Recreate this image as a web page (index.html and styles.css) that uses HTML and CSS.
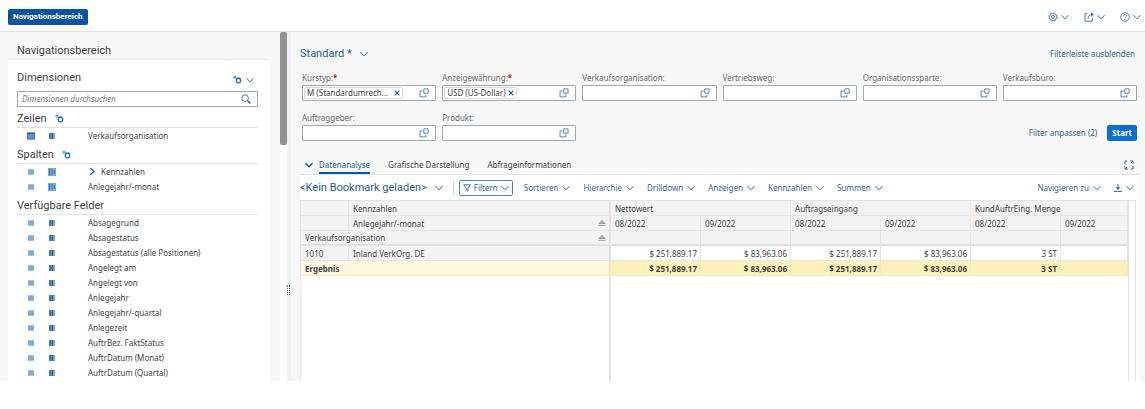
FILE: index.html
```html
<!DOCTYPE html>
<html lang="de">
<head>
    <meta charset="UTF-8">
    <meta name="viewport" content="width=device-width, initial-scale=1.0">
    <title>Navigationsbereich</title>
    <link rel="stylesheet" href="styles.css">
</head>
<body>
    <!-- Icon set -->
    <svg class="sprite" aria-hidden="true">
        <symbol id="i-down" viewBox="0 0 8 8"><path d="M.5 2.2 4 5.8l3.5-3.6" fill="none" stroke="currentColor"/></symbol>
        <symbol id="i-down-bold" viewBox="0 0 8 8"><path d="M.5 2.2 4 5.8l3.5-3.6" fill="none" stroke="currentColor" stroke-width="1.4"/></symbol>
        <symbol id="i-right" viewBox="0 0 8 8"><path d="M2 1l3.5 3L2 7" fill="none" stroke="currentColor" stroke-width="1.1"/></symbol>
        <symbol id="i-gear" viewBox="0 0 10 10"><g fill="none" stroke="currentColor"><circle cx="5" cy="5" r="3.5" stroke-width=".7"/><circle cx="5" cy="5" r="4.2" stroke-width=".8" stroke-dasharray="1.65 1.65"/><circle cx="5" cy="5" r="1.5" stroke-width=".9"/></g></symbol>
        <symbol id="i-share" viewBox="0 0 10 10"><path d="M3.4 1.4H1v7.8h7.4V6.2M4 6.6c0-2.6 1.4-4 4-4" fill="none" stroke="currentColor" stroke-width=".9"/><path d="M7.2.4 9.8 2.6 7.2 4.8z" fill="currentColor"/></symbol>
        <symbol id="i-help" viewBox="0 0 10 10"><g fill="none" stroke="currentColor" stroke-width=".8"><circle cx="5" cy="5" r="4.3"/><path d="M3.6 3.9c0-2 2.9-1.9 2.9-.2 0 1.1-1.5 1.1-1.5 2.3"/></g><circle cx="5" cy="7.3" r=".6" fill="currentColor"/></symbol>
        <symbol id="i-search" viewBox="0 0 10 10"><circle cx="4.1" cy="4.1" r="3.3" fill="none" stroke="currentColor" stroke-width=".9"/><path d="M6.5 6.5 9.4 9.4" stroke="currentColor" stroke-width="1.5"/></symbol>
        <symbol id="i-cogs" viewBox="0 0 9 9"><g fill="none" stroke="currentColor"><circle cx="5.5" cy="5.6" r="2.2" stroke-width="1.3"/><circle cx="1.9" cy="2.2" r="1.1" stroke-width=".9"/><path d="M2.6 2.9 4 4.2M3.8 2.9h3.8" stroke-width=".9"/></g></symbol>
        <symbol id="i-rows" viewBox="0 0 8 8"><path d="M1 1.6h6v4.9H1z" fill="#a3c3e2"/><path d="M1 2h6M1 4h6M1 6h6" stroke="#5b91c5" stroke-width=".9"/></symbol>
        <symbol id="i-rows-on" viewBox="0 0 8 8"><path d="M.5 1h7v6.2h-7z" fill="#72a3d2" stroke="#2664a5" stroke-width=".8"/><path d="M.2 1.4h7.6" stroke="#1d5b9e" stroke-width="1.6"/><path d="M1 4h6M1 5.7h6" stroke="#397bb9" stroke-width=".6"/></symbol>
        <symbol id="i-cols" viewBox="0 0 8 8"><path d="M1.2 1h5.4v6H1.2z" fill="#8eb4da"/><path d="M2 1v6M4.3 1v6" stroke="#1c5b9f" stroke-width="1.4"/><path d="M6.2 1v6" stroke="#4d86bf" stroke-width=".8"/></symbol>
        <symbol id="i-cols-on" viewBox="0 0 8 8"><path d="M0 0h8v8H0z" fill="#8db5dc"/><path d="M1.7 1v6M4 1v6M6.2 2v4" stroke="#2f6daf" stroke-width="1.1"/><path d="M.3.3h7.4v7.4H.3z" fill="none" stroke="#6495c6" stroke-width=".5"/></symbol>
        <symbol id="i-copy" viewBox="0 0 10 10"><path d="M4.8.9h4.3v4.3H4.8zM3.7 3H1v5.9h5.9V6.6" fill="none" stroke="currentColor" stroke-width=".9"/></symbol>
        <symbol id="i-close" viewBox="0 0 6 6"><path d="M.7.7 5.3 5.3M5.3.7.7 5.3" stroke="currentColor" stroke-width="1.1"/></symbol>
        <symbol id="i-full" viewBox="0 0 10 10"><path d="M1 4V1h2.2M6.2 1H9v2.8M9 6.2V9H6.6M3.8 9H1V6.2M1.2 8.8l1.9-1.9M8.8 1.2 6.9 3.1" fill="none" stroke="currentColor"/></symbol>
        <symbol id="i-filter" viewBox="0 0 8 8"><path d="M.7.8h6.6L5 4v3.2L3.2 6V4z" fill="none" stroke="currentColor" stroke-width=".9"/></symbol>
        <symbol id="i-load" viewBox="0 0 8 8"><path d="M4 0v5M0 7.4h8" stroke="currentColor"/><path d="M1.6 3.2h4.8L4 6z" fill="currentColor"/></symbol>
        <symbol id="i-sort" viewBox="0 0 8 8"><path d="M4 .8 7.2 4H.8z" fill="#aaa"/><path d="M.5 4.5h7M.5 6.3h7" stroke="#949494" stroke-width=".9"/></symbol>
    </svg>

    <header class="shell">
        <button class="btn-nav">Navigationsbereich</button>
        <div class="shell-tools">
            <button class="tool" aria-label="Einstellungen"><svg class="icon"><use href="#i-gear"/></svg><svg class="chev"><use href="#i-down"/></svg></button>
            <button class="tool" aria-label="Teilen"><svg class="icon"><use href="#i-share"/></svg><svg class="chev"><use href="#i-down"/></svg></button>
            <button class="tool" aria-label="Hilfe"><svg class="icon"><use href="#i-help"/></svg><svg class="chev"><use href="#i-down"/></svg></button>
        </div>
    </header>

    <div class="app">
        <aside class="sidebar">
            <h1 class="side-title">Navigationsbereich</h1>
            <div class="side-panel">
                <div class="dim-head">
                    <h2>Dimensionen</h2>
                    <button class="tool" aria-label="Anzeigeoptionen"><svg class="cogs"><use href="#i-cogs"/></svg><svg class="chev"><use href="#i-down"/></svg></button>
                </div>
                <div class="search">
                    <input type="text" aria-label="Dimensionen durchsuchen" placeholder="Dimensionen durchsuchen">
                    <button aria-label="Suchen"><svg class="icon"><use href="#i-search"/></svg></button>
                </div>

                <h2 class="group">Zeilen <svg class="cogs"><use href="#i-cogs"/></svg></h2>
                <ul class="fields">
                    <li><svg><use href="#i-rows-on"/></svg><svg><use href="#i-cols"/></svg><span>Verkaufsorganisation</span></li>
                </ul>

                <h2 class="group">Spalten <svg class="cogs"><use href="#i-cogs"/></svg></h2>
                <ul class="fields">
                    <li><svg><use href="#i-rows"/></svg><svg><use href="#i-cols-on"/></svg><span class="parent"><svg><use href="#i-right"/></svg>Kennzahlen</span></li>
                    <li><svg><use href="#i-rows"/></svg><svg><use href="#i-cols-on"/></svg><span>Anlegejahr/-monat</span></li>
                </ul>

                <h2 class="group">Verfügbare Felder</h2>
                <ul class="fields">
                    <li><svg><use href="#i-rows"/></svg><svg><use href="#i-cols"/></svg><span>Absagegrund</span></li>
                    <li><svg><use href="#i-rows"/></svg><svg><use href="#i-cols"/></svg><span>Absagestatus</span></li>
                    <li><svg><use href="#i-rows"/></svg><svg><use href="#i-cols"/></svg><span>Absagestatus (alle Positionen)</span></li>
                    <li><svg><use href="#i-rows"/></svg><svg><use href="#i-cols"/></svg><span>Angelegt am</span></li>
                    <li><svg><use href="#i-rows"/></svg><svg><use href="#i-cols"/></svg><span>Angelegt von</span></li>
                    <li><svg><use href="#i-rows"/></svg><svg><use href="#i-cols"/></svg><span>Anlegejahr</span></li>
                    <li><svg><use href="#i-rows"/></svg><svg><use href="#i-cols"/></svg><span>Anlegejahr/-quartal</span></li>
                    <li><svg><use href="#i-rows"/></svg><svg><use href="#i-cols"/></svg><span>Anlegezeit</span></li>
                    <li><svg><use href="#i-rows"/></svg><svg><use href="#i-cols"/></svg><span>AuftrBez. FaktStatus</span></li>
                    <li><svg><use href="#i-rows"/></svg><svg><use href="#i-cols"/></svg><span>AuftrDatum (Monat)</span></li>
                    <li><svg><use href="#i-rows"/></svg><svg><use href="#i-cols"/></svg><span>AuftrDatum (Quartal)</span></li>
                </ul>
            </div>
        </aside>
        <div class="scroll"><div class="scroll-thumb"></div></div>
        <div class="splitter"><div class="grip"></div></div>

        <main class="content">
            <div class="variant">
                <button class="variant-name">Standard *<svg class="chev"><use href="#i-down"/></svg></button>
                <a href="#">Filterleiste ausblenden</a>
            </div>

            <form class="filters">
                <div class="filter">
                    <label for="kurstyp">Kurstyp:<b>*</b></label>
                    <div class="field">
                        <span class="token wide"><span>M (Standardumrech...</span><button type="button" aria-label="Entfernen"><svg><use href="#i-close"/></svg></button></span>
                        <input type="text" id="kurstyp">
                        <button type="button" aria-label="Wertehilfe"><svg class="icon"><use href="#i-copy"/></svg></button>
                    </div>
                </div>
                <div class="filter">
                    <label for="waehrung">Anzeigewährung:<b>*</b></label>
                    <div class="field">
                        <span class="token"><span>USD (US-Dollar)</span><button type="button" aria-label="Entfernen"><svg><use href="#i-close"/></svg></button></span>
                        <input type="text" id="waehrung">
                        <button type="button" aria-label="Wertehilfe"><svg class="icon"><use href="#i-copy"/></svg></button>
                    </div>
                </div>
                <div class="filter">
                    <label for="vkorg">Verkaufsorganisation:</label>
                    <div class="field"><input type="text" id="vkorg"><button type="button" aria-label="Wertehilfe"><svg class="icon"><use href="#i-copy"/></svg></button></div>
                </div>
                <div class="filter">
                    <label for="vtweg">Vertriebsweg:</label>
                    <div class="field"><input type="text" id="vtweg"><button type="button" aria-label="Wertehilfe"><svg class="icon"><use href="#i-copy"/></svg></button></div>
                </div>
                <div class="filter">
                    <label for="sparte">Organisationssparte:</label>
                    <div class="field"><input type="text" id="sparte"><button type="button" aria-label="Wertehilfe"><svg class="icon"><use href="#i-copy"/></svg></button></div>
                </div>
                <div class="filter">
                    <label for="buero">Verkaufsbüro:</label>
                    <div class="field"><input type="text" id="buero"><button type="button" aria-label="Wertehilfe"><svg class="icon"><use href="#i-copy"/></svg></button></div>
                </div>
                <div class="filter">
                    <label for="auftraggeber">Auftraggeber:</label>
                    <div class="field"><input type="text" id="auftraggeber"><button type="button" aria-label="Wertehilfe"><svg class="icon"><use href="#i-copy"/></svg></button></div>
                </div>
                <div class="filter">
                    <label for="produkt">Produkt:</label>
                    <div class="field"><input type="text" id="produkt"><button type="button" aria-label="Wertehilfe"><svg class="icon"><use href="#i-copy"/></svg></button></div>
                </div>
                <div class="filter-actions">
                    <a href="#">Filter anpassen (2)</a>
                    <button type="button" class="btn-start">Start</button>
                </div>
            </form>

            <nav class="tabs">
                <button class="tab-toggle" aria-label="Tabs einklappen"><svg class="chev"><use href="#i-down-bold"/></svg></button>
                <a href="#" class="tab active">Datenanalyse</a>
                <a href="#" class="tab">Grafische Darstellung</a>
                <a href="#" class="tab">Abfrageinformationen</a>
                <button class="full" aria-label="Vollbild"><svg class="icon"><use href="#i-full"/></svg></button>
            </nav>

            <section class="card">
                <div class="toolbar">
                    <button class="bookmark">&lt;Kein Bookmark geladen&gt;<svg class="chev"><use href="#i-down"/></svg></button>
                    <span class="divider"></span>
                    <button class="tool boxed"><svg class="chev"><use href="#i-filter"/></svg>Filtern<svg class="chev"><use href="#i-down"/></svg></button>
                    <button class="tool">Sortieren<svg class="chev"><use href="#i-down"/></svg></button>
                    <button class="tool">Hierarchie<svg class="chev"><use href="#i-down"/></svg></button>
                    <button class="tool">Drilldown<svg class="chev"><use href="#i-down"/></svg></button>
                    <button class="tool">Anzeigen<svg class="chev"><use href="#i-down"/></svg></button>
                    <button class="tool">Kennzahlen<svg class="chev"><use href="#i-down"/></svg></button>
                    <button class="tool">Summen<svg class="chev"><use href="#i-down"/></svg></button>
                    <button class="tool push">Navigieren zu<svg class="chev"><use href="#i-down"/></svg></button>
                    <button class="tool" aria-label="Herunterladen"><svg class="chev"><use href="#i-load"/></svg><svg class="chev"><use href="#i-down"/></svg></button>
                </div>

                <div class="grid-wrap">
                    <table class="grid">
                        <colgroup>
                            <col class="c-key"><col class="c-text"><col class="c-val"><col class="c-val"><col class="c-val"><col class="c-val"><col class="c-val"><col>
                        </colgroup>
                        <thead>
                            <tr>
                                <th></th><th class="frozen">Kennzahlen</th>
                                <th colspan="2">Nettowert</th><th colspan="2">Auftragseingang</th><th colspan="2">KundAuftrEing. Menge</th>
                            </tr>
                            <tr>
                                <th></th><th class="frozen"><div class="sortable">Anlegejahr/-monat<svg class="chev"><use href="#i-sort"/></svg></div></th>
                                <th>08/2022</th><th>09/2022</th><th>08/2022</th><th>09/2022</th><th>08/2022</th><th>09/2022</th>
                            </tr>
                            <tr class="head-last">
                                <th colspan="2" class="frozen"><div class="sortable">Verkaufsorganisation<svg class="chev"><use href="#i-sort"/></svg></div></th>
                                <th></th><th></th><th></th><th></th><th></th><th></th>
                            </tr>
                        </thead>
                        <tbody>
                            <tr>
                                <th>1010</th><th class="frozen">Inland VerkOrg. DE</th>
                                <td>$ 251,889.17</td><td>$ 83,963.06</td><td>$ 251,889.17</td><td>$ 83,963.06</td><td>3 ST</td><td></td>
                            </tr>
                            <tr class="total">
                                <th colspan="2" class="frozen">Ergebnis</th>
                                <td>$ 251,889.17</td><td>$ 83,963.06</td><td>$ 251,889.17</td><td>$ 83,963.06</td><td>3 ST</td><td></td>
                            </tr>
                            <tr class="rest">
                                <td colspan="2" class="frozen"></td><td colspan="6"></td>
                            </tr>
                        </tbody>
                    </table>
                </div>
            </section>
        </main>
    </div>
</body>
</html>
```
FILE: styles.css
```css
* {
    box-sizing: border-box;
}

body {
    margin: 0;
    min-height: 100vh;
    padding-bottom: 28px;
    display: flex;
    flex-direction: column;
    background: #fff;
    color: #3f4142;
    font-family: "Noto Sans", "Open Sans", sans-serif;
    font-size: 8px;
    line-height: 12px;
}

h1,
h2,
ul {
    margin: 0;
    padding: 0;
    font-weight: 400;
    list-style: none;
}

button,
input {
    font: inherit;
    color: inherit;
    border: none;
    background: none;
    padding: 0;
    margin: 0;
}

button {
    cursor: pointer;
}

a {
    color: #326199;
    text-decoration: none;
}

svg {
    display: block;
    flex: none;
}

.sprite {
    display: none;
}

.icon {
    width: 10px;
    height: 10px;
}

.chev {
    width: 8px;
    height: 8px;
}

.cogs {
    width: 9px;
    height: 9px;
    color: #1f72c6;
}

.tool {
    display: flex;
    align-items: center;
    gap: 4px;
    color: #33649c;
}

/* Shell bar */
.shell {
    display: flex;
    align-items: center;
    justify-content: space-between;
    height: 32px;
    padding: 2px 4px 0 8px;
    border-bottom: 1px solid #e3e3e3;
}

.btn-nav {
    height: 16px;
    padding: 0 5px;
    border-radius: 2px;
    background: #0854a0;
    color: #fff;
    font-family: Roboto, sans-serif;
    font-weight: 700;
    line-height: 16px;
}

.shell-tools {
    display: flex;
    gap: 15px;
}

.shell-tools .tool {
    gap: 3px;
}

.app {
    flex: 1;
    display: flex;
    background: #f7f7f7;
}

/* Navigation panel */
.sidebar {
    flex: 0 0 280px;
    display: flex;
    flex-direction: column;
    padding: 0 10px 0 8px;
}

.side-title {
    height: 28px;
    padding: 12px 9px 0;
    font-size: 11px;
    line-height: 14px;
    font-family: Roboto, sans-serif;
    border-bottom: 1px solid #e8e8e8;
}

.side-panel {
    flex: 1;
    padding: 8px 12px 0 9px;
    background: #fff;
}

.side-panel h2 {
    font-family: Roboto, sans-serif;
    font-size: 11px;
    line-height: 20px;
}

.dim-head {
    display: flex;
    align-items: center;
    justify-content: space-between;
    height: 23px;
    padding-right: 4px;
}

.dim-head h2 {
    padding-bottom: 4px;
}

.search {
    display: flex;
    align-items: center;
    height: 16px;
    padding: 0 6px 0 4px;
    border: 1px solid #a3a8ad;
}

.search input {
    flex: 1;
    min-width: 0;
    outline: none;
}

.search input::placeholder {
    color: #74777a;
    font-style: italic;
}

.search button {
    color: #2a65a5;
}

.side-panel .group {
    display: flex;
    align-items: center;
    gap: 8px;
    height: 21px;
    padding-top: 3px;
    border-bottom: 1px solid #e3e3e3;
}

.fields li {
    display: flex;
    align-items: center;
    height: 15px;
    padding-left: 10px;
}

.fields li > svg {
    width: 8px;
    height: 8px;
    margin-right: 13px;
}

.fields li > span {
    margin-left: 19px;
}

.fields .parent {
    display: flex;
    align-items: center;
    gap: 4px;
}

.parent svg {
    width: 9px;
    height: 9px;
    color: #0854a0;
}

.scroll {
    flex: 0 0 7px;
    background: #fff;
}

.scroll-thumb {
    height: 113px;
    border-radius: 2px;
    background: #929292;
}

.splitter {
    flex: 0 0 4px;
    display: flex;
    align-items: flex-start;
    padding-top: 253px;
    background: #eff1f3;
}

.grip {
    width: 3px;
    height: 10px;
    border-left: 1px dotted #3d77b3;
    border-right: 1px dotted #3d77b3;
}

/* Filter bar */
.content {
    flex: 1;
    min-width: 0;
    display: flex;
    flex-direction: column;
    padding: 0 6px 0 9px;
}

.variant {
    display: flex;
    align-items: center;
    justify-content: space-between;
    height: 41px;
    padding: 3px 4px 0 0;
}

.variant-name,
.bookmark {
    display: flex;
    align-items: center;
    gap: 8px;
    color: #235b98;
    font-family: Roboto, sans-serif;
    font-size: 11px;
    line-height: 14px;
}

.filters {
    display: grid;
    grid-template-columns: repeat(6, 1fr);
    gap: 12px 6px;
    padding: 0 2px;
}

.filter {
    min-width: 0;
}

.filter label {
    display: block;
    height: 12px;
    color: #66696c;
    line-height: 10px;
}

.filter label b {
    color: #d00;
}

.field {
    display: flex;
    align-items: center;
    height: 16px;
    padding: 0 6px 0 1px;
    border: 1px solid #a3a8ad;
    border-radius: 1px;
    background: #fff;
}

.field input {
    flex: 1;
    width: 0;
    min-width: 0;
    outline: none;
}

.field > button {
    color: #4679b0;
}

.token {
    display: flex;
    align-items: center;
    gap: 2px;
    height: 12px;
    padding: 0 2px;
    border: 1px solid #d9d9d9;
    border-radius: 2px;
    line-height: 10px;
    white-space: nowrap;
}

.token.wide {
    gap: 6px;
}

.token svg {
    width: 6px;
    height: 6px;
    color: #0854a0;
}

.filter-actions {
    grid-column: 3 / -1;
    display: flex;
    align-items: flex-end;
    justify-content: flex-end;
    gap: 10px;
    line-height: 16px;
}

.btn-start {
    height: 16px;
    padding: 0 5px;
    border-radius: 2px;
    background: #0a6ed1;
    color: #fff;
    font-weight: 700;
}

/* Tabs */
.tabs {
    display: flex;
    align-items: center;
    height: 33px;
    padding: 15px 5px 0 5px;
}

.tab-toggle {
    margin-right: 6px;
    color: #0854a0;
}

.tab {
    height: 18px;
    margin-right: 18px;
    color: #3f4142;
    line-height: 18px;
}

.tab.active {
    border-bottom: 2px solid #0854a0;
    color: #235b98;
}

.full {
    margin-left: auto;
    color: #33649c;
}

.card {
    flex: 1;
    display: flex;
    flex-direction: column;
    background: #fff;
    border-top: 1px solid #e3e3e3;
}

.toolbar {
    display: flex;
    align-items: center;
    gap: 13px;
    height: 25px;
    padding-right: 5px;
}

.divider {
    width: 1px;
    height: 14px;
    margin: 0 -8px 0 -3px;
    background: #ccc;
}

.boxed {
    height: 16px;
    margin-right: -2px;
    padding: 0 3px;
    gap: 3px;
    border: 1px solid #4c80b8;
    border-radius: 2px;
}

.push {
    margin-left: auto;
}

/* Result grid */
.grid-wrap {
    flex: 1;
    display: flex;
    margin-right: 3px;
    padding-right: 6px;
    border: 1px solid #e3e3e3;
    border-bottom: none;
}

.grid {
    flex: 1;
    width: 100%;
    table-layout: fixed;
    border-collapse: separate;
    border-spacing: 0;
    border-right: 1px solid #e3e3e3;
}

.c-key {
    width: 48px;
}

.c-text {
    width: 262px;
}

.c-val {
    width: 90px;
}

.grid th,
.grid td {
    height: 15px;
    padding: 0 3px 0 4px;
    border-right: 1px solid #e5e5e5;
    border-bottom: 1px solid #e5e5e5;
    font-weight: 400;
    line-height: 13px;
    text-align: left;
    white-space: nowrap;
}

.grid th {
    background: #f2f2f2;
}

.grid td {
    text-align: right;
}

.grid .frozen {
    border-right: 2px solid #e0e0e0;
}

.grid .head-last th {
    border-bottom: 2px solid #e0e0e0;
}

.sortable {
    display: flex;
    align-items: center;
    justify-content: space-between;
}

.grid .total th,
.grid .total td {
    font-weight: 700;
    background: #fdf1bb;
    border-color: #f1e8bd;
}

.grid .total th {
    background: #fdf7e0;
}

.grid .rest td {
    height: auto;
    border-bottom: none;
}

.grid .rest td:last-child {
    border-right: none;
}
```
